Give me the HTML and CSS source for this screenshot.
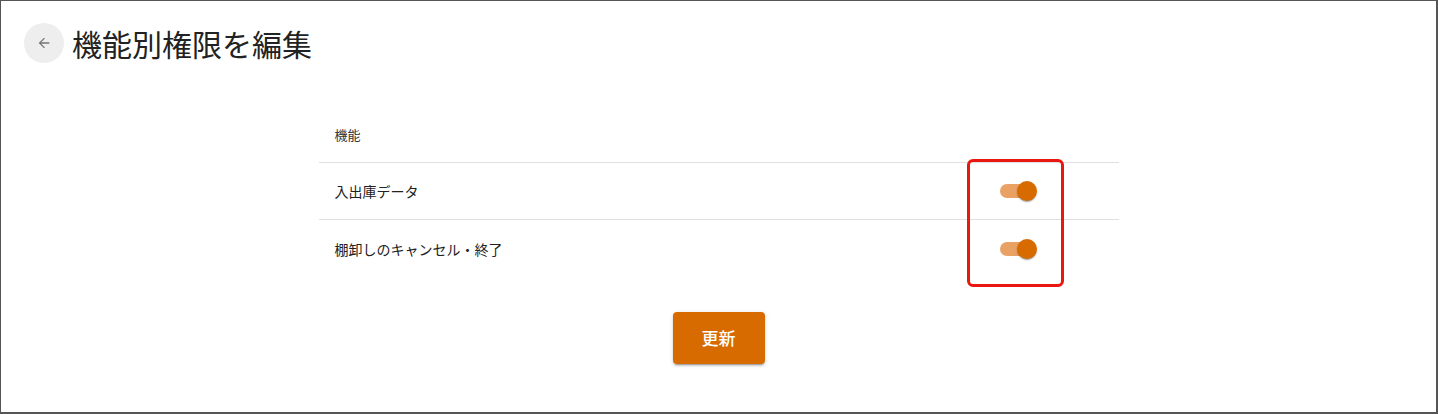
FILE: index.html
```html
<!DOCTYPE html>
<html lang="ja">
<head>
<meta charset="utf-8">
<title>機能別権限を編集</title>
<link rel="stylesheet" href="styles.css">
</head>
<body>
<div class="frame">
  <header class="page-header">
    <button class="back-btn" aria-label="戻る">
      <svg width="16" height="16" viewBox="0 0 24 24"><path d="M20 11H7.83l5.59-5.59L12 4l-8 8 8 8 1.41-1.41L7.83 13H20v-2z" fill="#777"/></svg>
    </button>
    <h1 class="title">機能別権限を編集</h1>
  </header>

  <main class="content">
    <div class="table">
      <div class="row head">
        <div class="cell name">機能</div>
        <div class="cell toggle-cell"></div>
      </div>
      <div class="row">
        <div class="cell name">入出庫データ</div>
        <div class="cell toggle-cell"><span class="toggle"><span class="track"></span><span class="thumb"></span></span></div>
      </div>
      <div class="row last">
        <div class="cell name">棚卸しのキャンセル・終了</div>
        <div class="cell toggle-cell"><span class="toggle"><span class="track"></span><span class="thumb"></span></span></div>
      </div>
      <div class="highlight"></div>
    </div>
    <button class="submit">更新</button>
  </main>
</div>
</body>
</html>
```

FILE: styles.css
```css
* { box-sizing: border-box; }
html, body { margin: 0; padding: 0; background: #fff; }
body {
  font-family: "Noto Sans CJK JP", "Noto Sans", "Liberation Sans", sans-serif;
  color: #212121;
}
.frame {
  width: 1438px;
  height: 414px;
  border: 1px solid #555;
  border-right-width: 2px;
  border-bottom-width: 2px;
}
.page-header {
  display: flex;
  align-items: center;
  gap: 8px;
  padding: 22px 0 0 23px;
}
.back-btn {
  width: 40px;
  height: 40px;
  border-radius: 50%;
  border: none;
  background: #eeeeee;
  display: flex;
  align-items: center;
  justify-content: center;
  padding: 0;
}
.title {
  margin: 0;
  font-size: 30px;
  font-weight: 400;
  line-height: 40px;
  color: #222;
}
.content {
  display: flex;
  flex-direction: column;
  align-items: center;
  padding-top: 43px;
}
.table {
  position: relative;
  width: 800px;
}
.row {
  display: flex;
  align-items: center;
  height: 57px;
  border-bottom: 1px solid #e0e0e0;
}
.row.last { border-bottom: none; }
.cell.name {
  flex: 1;
  padding-left: 16px;
  font-size: 14px;
}
.row.head .cell.name { font-size: 13px; color: #333; }
.toggle-cell {
  width: 200px;
  display: flex;
  justify-content: flex-end;
  padding-right: 83px;
}
.toggle {
  position: relative;
  width: 36px;
  height: 20px;
  display: block;
}
.track {
  position: absolute;
  left: 0;
  top: 3px;
  width: 36px;
  height: 14px;
  border-radius: 7px;
  background: #e9a263;
}
.thumb {
  position: absolute;
  left: 17px;
  top: 0;
  width: 20px;
  height: 20px;
  border-radius: 50%;
  background: #d86b00;
  box-shadow: 0 2px 1px -1px rgba(0,0,0,.2), 0 1px 1px rgba(0,0,0,.14), 0 1px 3px rgba(0,0,0,.12);
}
.highlight {
  position: absolute;
  left: 648px;
  top: 53px;
  width: 97px;
  height: 128px;
  border: 3px solid #e8170f;
  border-radius: 6px;
}
.submit {
  margin-top: 35px;
  width: 92px;
  height: 52px;
  border: none;
  border-radius: 4px;
  background: #d76b00;
  color: #fff;
  font-family: inherit;
  font-size: 17px;
  font-weight: 500;
  line-height: 1;
  padding: 0 0 2px;
  box-shadow: 0 3px 1px -2px rgba(0,0,0,.2), 0 2px 2px rgba(0,0,0,.14), 0 1px 5px rgba(0,0,0,.12);
}
```
